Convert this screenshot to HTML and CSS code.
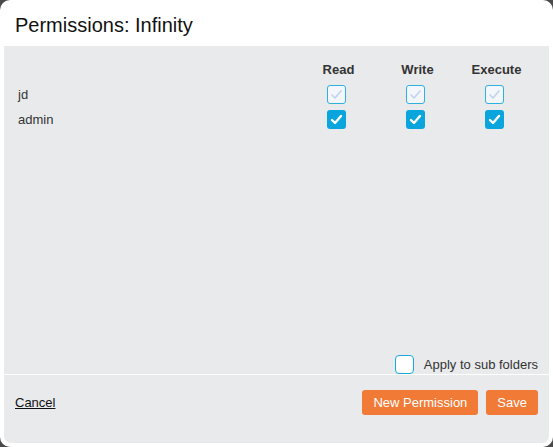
FILE: index.html
```html
<!DOCTYPE html>
<html>
<head>
<meta charset="utf-8">
<link rel="stylesheet" href="styles.css">
</head>
<body>
<div class="dialog">
  <div class="title">Permissions: Infinity</div>
  <div class="panel">
    <div class="main">
      <div class="grid">
        <div></div>
        <div class="colhead">Read</div>
        <div class="colhead">Write</div>
        <div class="colhead">Execute</div>

        <div class="name">jd</div>
        <div class="cell"><span class="cb cb-dis"><svg viewBox="0 0 19 19"><path d="M5 10l3 3 6-7"/></svg></span></div>
        <div class="cell"><span class="cb cb-dis"><svg viewBox="0 0 19 19"><path d="M5 10l3 3 6-7"/></svg></span></div>
        <div class="cell"><span class="cb cb-dis"><svg viewBox="0 0 19 19"><path d="M5 10l3 3 6-7"/></svg></span></div>

        <div class="name">admin</div>
        <div class="cell"><span class="cb cb-on"><svg viewBox="0 0 19 19"><path d="M5 10l3 3 6-7"/></svg></span></div>
        <div class="cell"><span class="cb cb-on"><svg viewBox="0 0 19 19"><path d="M5 10l3 3 6-7"/></svg></span></div>
        <div class="cell"><span class="cb cb-on"><svg viewBox="0 0 19 19"><path d="M5 10l3 3 6-7"/></svg></span></div>
      </div>
      <div class="apply">
        <span class="cb cb-off"></span>
        <span class="apply-label">Apply to sub folders</span>
      </div>
    </div>
    <div class="footer">
      <a class="cancel" href="#">Cancel</a>
      <div class="buttons">
        <button class="btn">New Permission</button>
        <button class="btn btn-save">Save</button>
      </div>
    </div>
  </div>
</div>
</body>
</html>
```

FILE: styles.css
```css
html, body {
  margin: 0;
  padding: 0;
}
body {
  background: #4a4a4a;
  font-family: "Liberation Sans", Arial, sans-serif;
  width: 553px;
  height: 447px;
  overflow: hidden;
}
.dialog {
  box-sizing: border-box;
  width: 553px;
  height: 447px;
  background: #fff;
  border-radius: 10px;
  padding: 0 4px 4px 4px;
  display: flex;
  flex-direction: column;
}
.title {
  box-sizing: border-box;
  height: 46px;
  padding: 14px 0 0 11px;
  font-size: 20px;
  line-height: 23px;
  color: #111;
}
.panel {
  flex: 1;
  background: #e9eaec;
  border-radius: 0 0 7px 7px;
  display: flex;
  flex-direction: column;
}
.main {
  height: 328px;
  display: flex;
  flex-direction: column;
  border-bottom: 1px solid #fff;
}
.grid {
  display: grid;
  grid-template-columns: 1fr 79px 79px 79px;
  grid-template-rows: 20px 25px 25px;
  padding: 16px 15px 0 14px;
  flex: 1;
  align-content: start;
}
.colhead {
  font-size: 13px;
  font-weight: bold;
  line-height: 16px;
  color: #333;
  text-align: center;
  padding-left: 4px;
}
.name {
  font-size: 13px;
  color: #333;
  display: flex;
  align-items: center;
}
.cell {
  display: flex;
  align-items: center;
  justify-content: center;
}
.cb {
  box-sizing: border-box;
  width: 19px;
  height: 19px;
  border-radius: 3px;
  display: inline-block;
}
.cb svg {
  width: 19px;
  height: 19px;
  display: block;
  fill: none;
  stroke-width: 2.4;
  stroke-linecap: round;
  stroke-linejoin: round;
}
.cb-dis {
  background: #f3f6fb;
  border: 1px solid #2fb0e0;
}
.cb-dis svg {
  margin: -1px;
  stroke: #c3d4f0;
  stroke-width: 1.7;
}
.cb-on {
  background: #0aa5dd;
}
.cb-on svg {
  stroke: #fff;
}
.cb-off {
  background: #fff;
  border: 1.5px solid #17a9df;
  border-radius: 4px;
}
.apply {
  display: flex;
  align-items: center;
  justify-content: flex-end;
  padding-right: 11px;
  height: 19px;
}
.apply-label {
  font-size: 13px;
  color: #333;
  margin-left: 10px;
}
.footer {
  display: flex;
  justify-content: space-between;
  align-items: flex-start;
  padding: 15px 11px 0 11px;
}
.cancel {
  font-size: 13px;
  color: #111;
  text-decoration: underline;
  line-height: 26px;
}
.buttons {
  display: flex;
  gap: 8px;
}
.btn {
  height: 25px;
  border: none;
  border-radius: 3px;
  background: #f07a36;
  color: #fff;
  font-family: "Liberation Sans", Arial, sans-serif;
  font-size: 13px;
  padding: 0 11px;
}
.btn-save {
  padding: 0 11px;
}
```
